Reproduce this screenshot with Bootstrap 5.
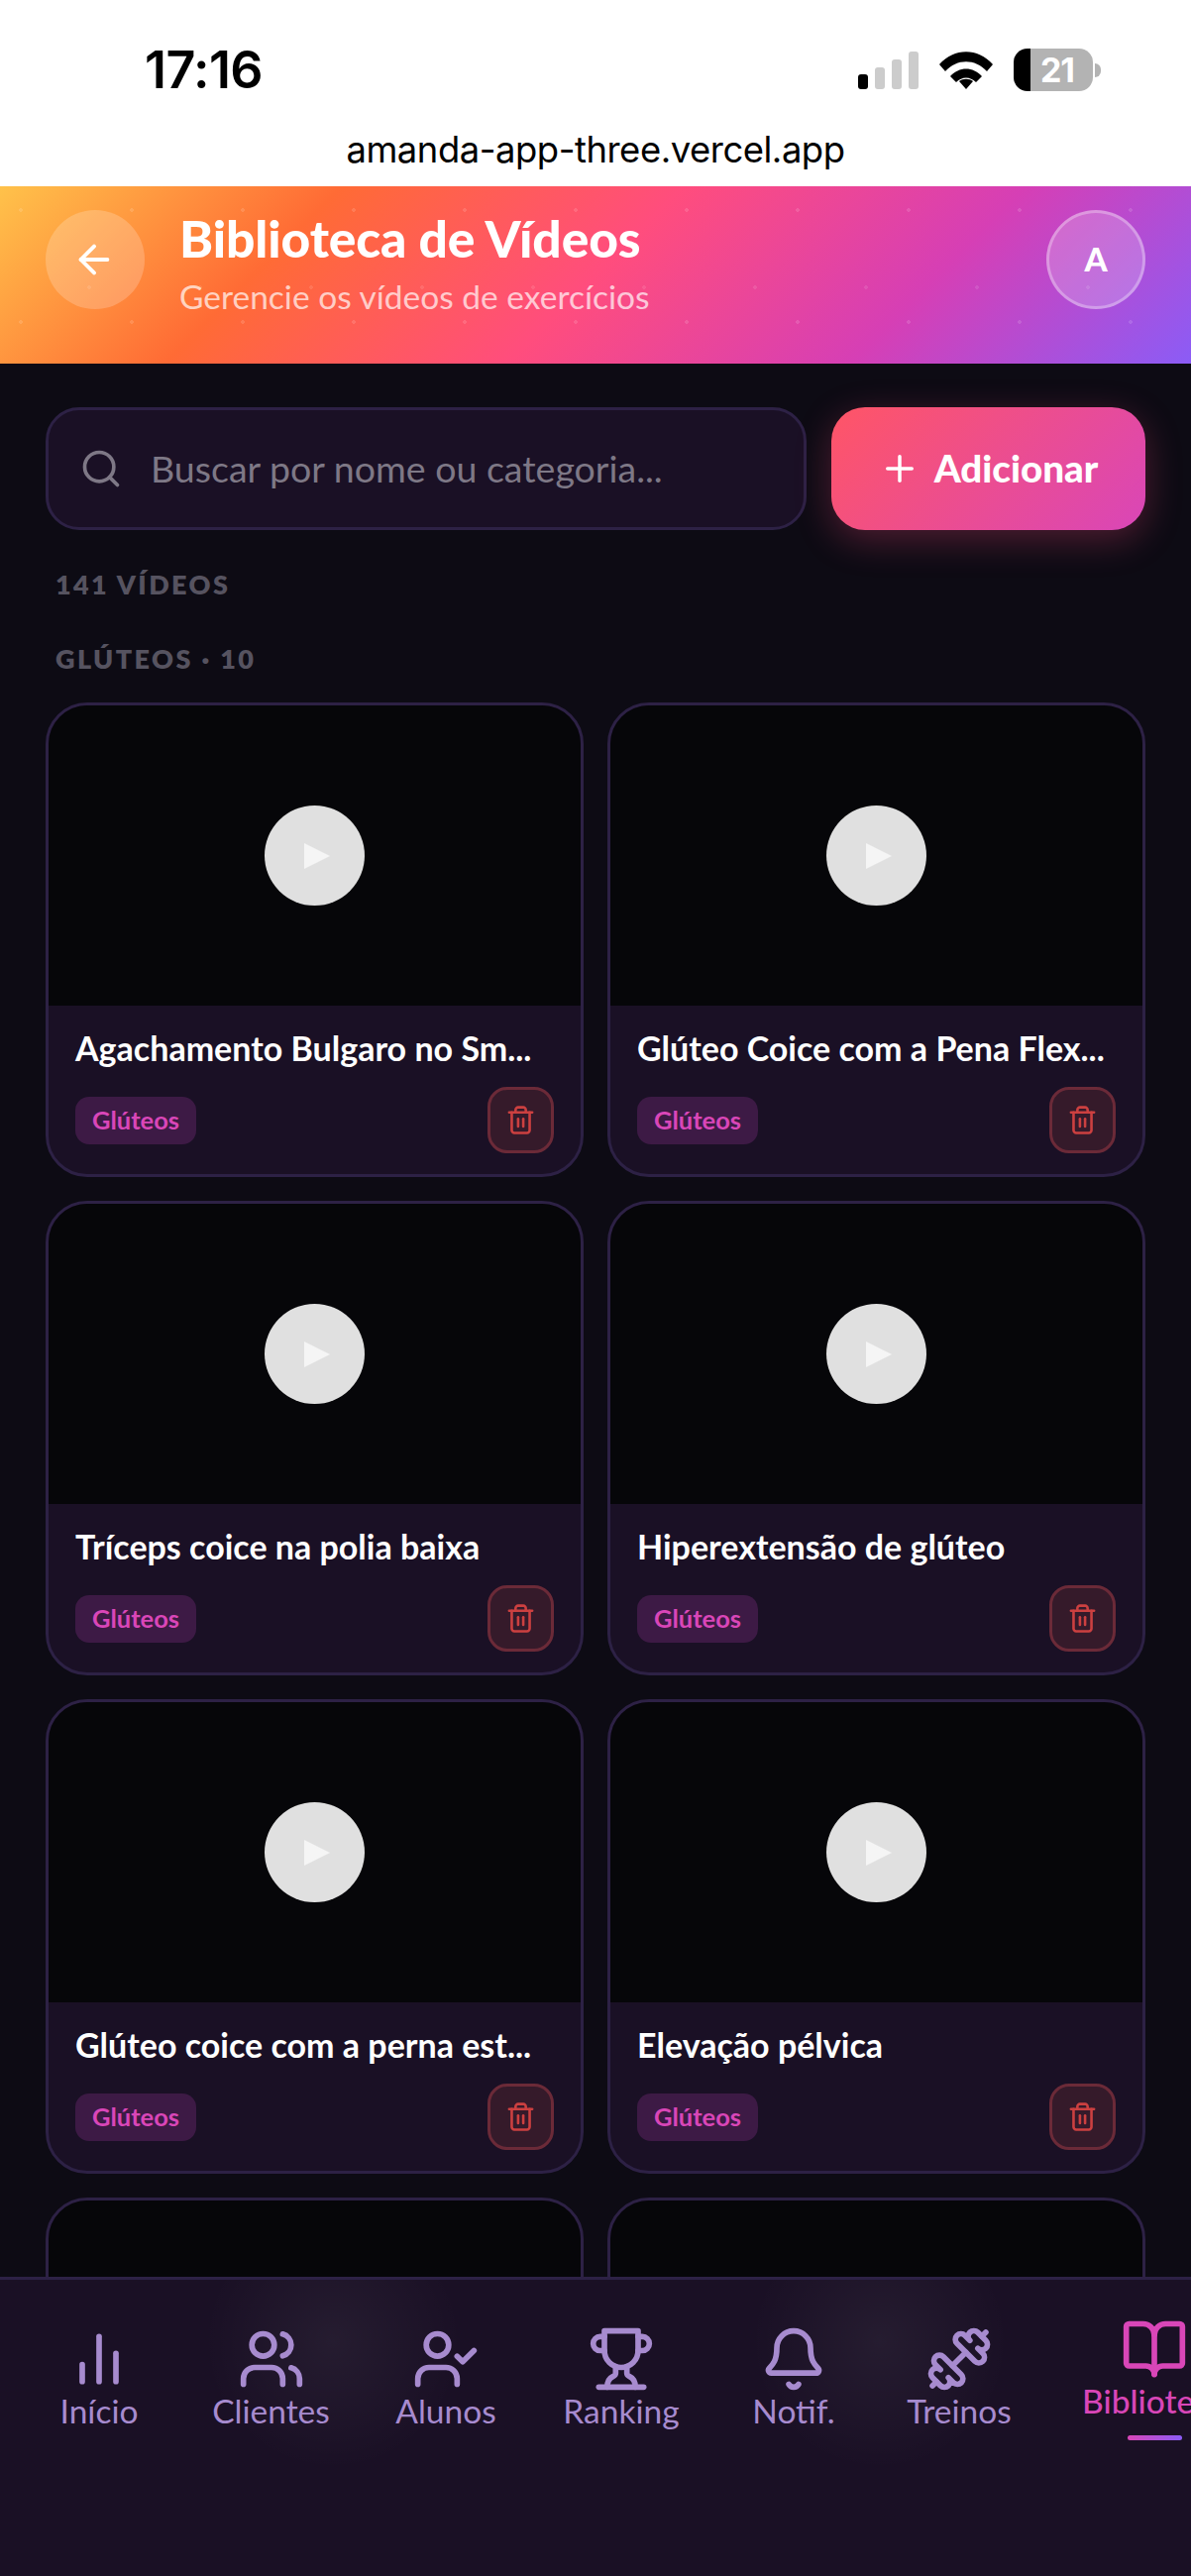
<!DOCTYPE html>
<html lang="pt-BR">
  <head>
    <meta charset="UTF-8">
    <meta name="viewport" content="width=device-width, initial-scale=1.0">
    <title>Biblioteca de Vídeos</title>
    <link href="https://cdn.jsdelivr.net/npm/bootstrap@5.3.0/dist/css/bootstrap.min.css" rel="stylesheet">
    <style>
      html, body { margin: 0; background: #0d0b14; }
      body { font-family: "Lato", "Liberation Sans", sans-serif; }
      .phone-shell { height: 2600px; overflow: hidden; }
      svg.line-icon { fill: none; stroke: currentColor; stroke-linecap: round; stroke-linejoin: round; stroke-width: 2; display: block; }

      /* browser chrome */
      .chrome-bar { height: 188px; background: #fff; color: #000; flex: none; }
      .status-row { padding: 42px 91px 0 146px; height: 129px; }
      .status-time { font: 600 52px/58px "Inter", sans-serif; letter-spacing: -.6px; }
      .signal-bars { gap: 7px; height: 38px; margin-top: 10px; margin-right: 21px; }
      .signal-bars span { width: 10px; border-radius: 3px; background: #ccc; }
      .signal-bars span:nth-child(1) { height: 15px; background: #000; }
      .signal-bars span:nth-child(2) { height: 22px; }
      .signal-bars span:nth-child(3) { height: 30px; }
      .signal-bars span:nth-child(4) { height: 38px; }
      .wifi-mark { margin-top: 10px; margin-right: 21px; }
      .battery-wrap { margin-top: 7px; }
      .battery-pill { width: 80px; height: 43px; border-radius: 14px; background: linear-gradient(90deg, #000 21%, #b3b3b3 21%); color: #fff; font: 700 34px/43px "Inter", sans-serif; text-align: center; padding-left: 8px; letter-spacing: -1px; }
      .battery-nub { width: 6px; height: 14px; border-radius: 0 7px 7px 0; background: #b3b3b3; margin-left: 2px; }
      .url-line { font: 400 36.4px/44px "Inter", sans-serif; letter-spacing: -.45px; text-align: center; }

      /* gradient header */
      .app-header { height: 179px; flex: none; padding: 24px 46px 0; gap: 35px; color: #fff;
        background:
          radial-gradient(circle 2px at 21px 24px, rgba(255,255,255,.13) 99%, transparent),
          radial-gradient(circle 2px at 90px 102px, rgba(255,255,255,.1) 99%, transparent),
          linear-gradient(135deg, #ffc24a 0%, #ff6b35 25%, #ff4d7d 50%, #d63fb5 75%, #8b5cf6 100%);
        background-size: 112px 113px, 112px 113px, auto; }
      .round-chip { width: 100px; height: 100px; border-radius: 50%; background: rgba(255,255,255,.2); flex: none; }
      .back-chip svg { margin-left: -3px; }
      .avatar-chip { border: 3px solid rgba(255,255,255,.3); font-size: 33px; font-weight: 900; }
      .header-title { font-size: 51.5px; font-weight: 900; line-height: 58px; margin-top: -1px; letter-spacing: -.1px; }
      .header-sub { font-size: 33.5px; line-height: 36px; margin-top: 12px; color: rgba(255,255,255,.7); }

      /* search + add */
      .page-main { padding: 44px 46px 0; min-height: 0; overflow: hidden; }
      .search-row { gap: 25px; height: 124px; }
      .search-box { width: 768px; border-radius: 34px; background: #1a1025; border: 3px solid #2d2145; padding-left: 31px; gap: 28px; color: #7e7886; }
      .search-box svg { flex: none; }
      .search-box input { background: none; border: 0; outline: 0; flex: 1; min-width: 0; font-size: 37.5px; padding: 0; color: #fff; }
      .search-box input::placeholder { color: #7e7886; opacity: 1; }
      .add-btn { flex: 1; border: 0; border-radius: 34px; color: #fff; font-size: 38.5px; font-weight: 900; gap: 14px; --bs-btn-color: #fff; --bs-btn-hover-color: #fff;
        background: linear-gradient(135deg, #ff5566 0%, #d946b8 100%); box-shadow: 0 10px 36px rgba(255, 77, 125, .28); }

      .section-label { font-size: 27px; font-weight: 800; letter-spacing: 2.4px; line-height: 32px; color: #565360; padding-left: 10px; }
      .count-label { margin-top: 39px; }
      .group-label { margin-top: 43px; margin-bottom: 28px; }

      /* video cards */
      .video-card { height: 479px; border: 3px solid #2d2145; border-radius: 42px; background: #1a1025; overflow: hidden; color: #fff; }
      .video-thumb { height: 303px; background: #060609; flex: none; }
      .play-disc { width: 101px; height: 101px; border-radius: 50%; background: #e0e0e0; }
      .play-tri { width: 0; height: 0; border-left: 26px solid #f5f5f5; border-top: 13px solid transparent; border-bottom: 13px solid transparent; margin-left: 4px; }
      .video-body { padding: 23px 27px 0; }
      .video-name { font-size: 34px; font-weight: 700; line-height: 40px; white-space: nowrap; }
      .video-meta { margin-top: 19px; }
      .group-chip { height: 48px; padding: 0 17px; border-radius: 14px; background: #3d1a45; color: #d946b8; font-size: 25.5px; font-weight: 700; }
      .trash-btn { width: 67px; height: 67px; padding: 0; border-radius: 20px; background: #351a2a; border: 3px solid #6b2a38; color: #cc4040; }

      /* bottom tabs */
      .tab-bar { height: 302px; flex: none; overflow: hidden; border-top: 3px solid #2d2145; padding: 0 0 0 27px; color: #a78bcf;
        background:
          radial-gradient(circle 130px at 336px 62px, rgba(255,255,255,.05), transparent),
          radial-gradient(circle 130px at 888px 62px, rgba(255,255,255,.05), transparent),
          #1a1025; }
      .tab-item { flex: none; padding-top: 46px; text-align: center; font-size: 33.5px; line-height: 36px; }
      .tab-item svg { margin: 0 auto; }
      .tab-item.is-active { color: #d946b8; padding-top: 36px; font-weight: 500; }
      .tab-rule { width: 55px; height: 5px; border-radius: 3px; margin: 17px auto 0; background: linear-gradient(90deg, #d946b8, #8b5cf6); }
    </style>
  </head>
  <body>
    <div class="phone-shell d-flex flex-column">
      <div class="chrome-bar">
        <div class="status-row d-flex justify-content-between">
          <div class="status-time">17:16</div>
          <div class="d-flex align-items-start">
            <div class="signal-bars d-flex align-items-end"><span></span><span></span><span></span><span></span></div>
            <svg class="wifi-mark" width="54" height="38" viewBox="0 0 54 38">
              <path d="M0 13C15-4 39-4 54 13l-6 7C36 7 18 7 6 20Z"/>
              <path d="M11 25c9-10 23-10 32 0l-6 6c-6-6-14-6-20 0Z"/>
              <path d="M20 30c4-3 10-3 14 0l-7 8Z"/>
            </svg>
            <div class="battery-wrap d-flex align-items-center">
              <div class="battery-pill">21</div>
              <div class="battery-nub"></div>
            </div>
          </div>
        </div>
        <div class="url-line">amanda-app-three.vercel.app</div>
      </div>

      <header class="app-header d-flex align-items-start">
        <a class="round-chip back-chip d-flex align-items-center justify-content-center text-white" href="#">
          <svg class="line-icon" width="46" height="46" viewBox="0 0 24 24" stroke-width="2.6"><path d="m12 19-7-7 7-7"/><path d="M19 12H5"/></svg>
        </a>
        <div class="flex-grow-1">
          <div class="header-title">Biblioteca de Vídeos</div>
          <div class="header-sub">Gerencie os vídeos de exercícios</div>
        </div>
        <div class="round-chip avatar-chip d-flex align-items-center justify-content-center">A</div>
      </header>

      <main class="page-main flex-grow-1">
        <div class="search-row d-flex">
          <label class="search-box d-flex align-items-center">
            <svg class="line-icon" width="44" height="44" viewBox="0 0 24 24" stroke-width="1.7"><circle cx="11" cy="11" r="8"/><path d="m21 21-4.3-4.3"/></svg>
            <input type="text" placeholder="Buscar por nome ou categoria...">
          </label>
          <button class="add-btn btn d-flex align-items-center justify-content-center" type="button">
            <svg class="line-icon" width="42" height="42" viewBox="0 0 24 24"><path d="M5 12h14"/><path d="M12 5v14"/></svg>
            Adicionar
          </button>
        </div>
        <div class="section-label count-label">141 VÍDEOS</div>
        <div class="section-label group-label">GLÚTEOS · 10</div>
        <div id="video-grid" class="row row-cols-2 g-4"></div>
      </main>

      <nav class="tab-bar d-flex">
        <div class="tab-item" style="width:146px">
          <svg class="line-icon" width="68" height="68" viewBox="0 0 24 24" stroke-width="1.8"><path d="M18 20V10"/><path d="M12 20V4"/><path d="M6 20v-6"/></svg>Início
        </div>
        <div class="tab-item" style="width:175px;margin-left:13px">
          <svg class="line-icon" width="68" height="68" viewBox="0 0 24 24" stroke-width="1.8"><path d="M16 21v-2a4 4 0 0 0-4-4H6a4 4 0 0 0-4 4v2"/><circle cx="9" cy="7" r="4"/><path d="M22 21v-2a4 4 0 0 0-3-3.87"/><path d="M16 3.13a4 4 0 0 1 0 7.75"/></svg>Clientes
        </div>
        <div class="tab-item" style="width:178px">
          <svg class="line-icon" width="68" height="68" viewBox="0 0 24 24" stroke-width="1.8"><path d="M16 21v-2a4 4 0 0 0-4-4H6a4 4 0 0 0-4 4v2"/><circle cx="9" cy="7" r="4"/><path d="m16 11 2 2 4-4"/></svg>Alunos
        </div>
        <div class="tab-item" style="width:176px">
          <svg class="line-icon" width="68" height="68" viewBox="0 0 24 24" stroke-width="1.8"><path d="M6 9H4.5a2.5 2.5 0 0 1 0-5H6"/><path d="M18 9h1.5a2.5 2.5 0 0 0 0-5H18"/><path d="M4 22h16"/><path d="M10 14.66V17c0 .55-.47.98-.97 1.21C7.85 18.75 7 20.24 7 22"/><path d="M14 14.66V17c0 .55.47.98.97 1.21C16.15 18.75 17 20.24 17 22"/><path d="M18 2H6v7a6 6 0 0 0 12 0V2Z"/></svg>Ranking
        </div>
        <div class="tab-item" style="width:172px">
          <svg class="line-icon" width="68" height="68" viewBox="0 0 24 24" stroke-width="1.8"><path d="M10.268 21a2 2 0 0 0 3.464 0"/><path d="M3.262 15.326A1 1 0 0 0 4 17h16a1 1 0 0 0 .74-1.673C19.41 13.956 18 12.499 18 8A6 6 0 0 0 6 8c0 4.499-1.411 5.956-2.738 7.326"/></svg>Notif.
        </div>
        <div class="tab-item" style="width:162px">
          <svg class="line-icon" width="68" height="68" viewBox="0 0 24 24" stroke-width="1.8"><g transform="translate(24 0) scale(-1 1)"><path d="M14.4 14.4 9.6 9.6"/><path d="M18.657 21.485a2 2 0 1 1-2.829-2.828l-1.767 1.768a2 2 0 1 1-2.829-2.829l6.364-6.364a2 2 0 1 1 2.829 2.829l-1.768 1.767a2 2 0 1 1 2.828 2.829z"/><path d="m21.5 21.5-1.4-1.4"/><path d="M3.9 3.9 2.5 2.5"/><path d="M6.404 12.768a2 2 0 1 1-2.829-2.829l1.768-1.767a2 2 0 1 1-2.828-2.829l2.828-2.828a2 2 0 1 1 2.829 2.828l1.767-1.768a2 2 0 1 1 2.829 2.829z"/></g></svg>Treinos
        </div>
        <div class="tab-item is-active" style="width:232px">
          <svg class="line-icon" width="68" height="68" viewBox="0 0 24 24" stroke-width="1.8"><path d="M12 7v14"/><path d="M3 18a1 1 0 0 1-1-1V4a1 1 0 0 1 1-1h5a4 4 0 0 1 4 4 4 4 0 0 1 4-4h5a1 1 0 0 1 1 1v13a1 1 0 0 1-1 1h-6a3 3 0 0 0-3 3 3 3 0 0 0-3-3z"/></svg>Biblioteca
          <div class="tab-rule"></div>
        </div>
      </nav>
    </div>

    <script>
      // last two are the cards peeking out above the tab bar, only their thumb shows
      const videos = [
        "Agachamento Bulgaro no Sm...",
        "Glúteo Coice com a Pena Flex...",
        "Tríceps coice na polia baixa",
        "Hiperextensão de glúteo",
        "Glúteo coice com a perna est...",
        "Elevação pélvica",
        null,
        null
      ];

      const grid = document.getElementById("video-grid");
      videos.forEach(function (name) {
        const col = document.createElement("div");
        col.className = "col";
        let body = "";
        if (name) {
          body =
            '<div class="video-body">' +
              '<div class="video-name">' + name + '</div>' +
              '<div class="video-meta d-flex align-items-center justify-content-between">' +
                '<span class="group-chip d-inline-flex align-items-center">Glúteos</span>' +
                '<button class="trash-btn btn d-flex align-items-center justify-content-center" type="button">' +
                  '<svg class="line-icon" width="31" height="31" viewBox="0 0 24 24"><path d="M3 6h18"/><path d="M19 6v14c0 1-1 2-2 2H7c-1 0-2-1-2-2V6"/><path d="M8 6V4c0-1 1-2 2-2h4c1 0 2 1 2 2v2"/><path d="M10 11v6"/><path d="M14 11v6"/></svg>' +
                '</button>' +
              '</div>' +
            '</div>';
        }
        col.innerHTML =
          '<div class="video-card d-flex flex-column">' +
            '<div class="video-thumb d-flex align-items-center justify-content-center">' +
              (name ? '<div class="play-disc d-flex align-items-center justify-content-center"><div class="play-tri"></div></div>' : '') +
            '</div>' +
            body +
          '</div>';
        grid.appendChild(col);
      });
    </script>
    <script src="https://cdn.jsdelivr.net/npm/bootstrap@5.3.0/dist/js/bootstrap.bundle.min.js"></script>
  </body>
</html>
